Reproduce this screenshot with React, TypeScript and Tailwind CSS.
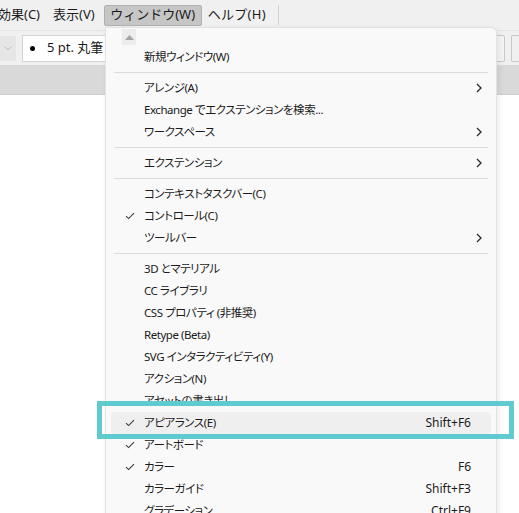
import React from 'react';

type Row =
    | { kind: 'sep' }
    | { kind: 'item'; label: string; check?: boolean; sub?: boolean; shortcut?: string; active?: boolean };

const rows: Row[] = [
    { kind: 'item', label: '新規ウィンドウ(W)' },
    { kind: 'sep' },
    { kind: 'item', label: 'アレンジ(A)', sub: true },
    { kind: 'item', label: 'Exchange でエクステンションを検索...' },
    { kind: 'item', label: 'ワークスペース', sub: true },
    { kind: 'sep' },
    { kind: 'item', label: 'エクステンション', sub: true },
    { kind: 'sep' },
    { kind: 'item', label: 'コンテキストタスクバー(C)' },
    { kind: 'item', label: 'コントロール(C)', check: true },
    { kind: 'item', label: 'ツールバー', sub: true },
    { kind: 'sep' },
    { kind: 'item', label: '3D とマテリアル' },
    { kind: 'item', label: 'CC ライブラリ' },
    { kind: 'item', label: 'CSS プロパティ (非推奨)' },
    { kind: 'item', label: 'Retype (Beta)' },
    { kind: 'item', label: 'SVG インタラクティビティ(Y)' },
    { kind: 'item', label: 'アクション(N)' },
    { kind: 'item', label: 'アセットの書き出し' },
    { kind: 'item', label: 'アピアランス(E)', check: true, shortcut: 'Shift+F6', active: true },
    { kind: 'item', label: 'アートボード', check: true },
    { kind: 'item', label: 'カラー', check: true, shortcut: 'F6' },
    { kind: 'item', label: 'カラーガイド', shortcut: 'Shift+F3' },
    { kind: 'item', label: 'グラデーション', shortcut: 'Ctrl+F9' },
];

function Check() {
    return (
        <svg width="10" height="8" viewBox="0 0 10 8" fill="none">
            <path d="M1 4.2 L3.6 6.6 L9 1.2" stroke="#3a3a3a" strokeWidth="1.1" />
        </svg>
    );
}

function Chevron() {
    return (
        <svg width="6" height="10" viewBox="0 0 6 10" fill="none">
            <path d="M1 1 L5 5 L1 9" stroke="#2a2a2a" strokeWidth="1.3" />
        </svg>
    );
}

function MenuRow({ row }: { row: Row }) {
    if (row.kind === 'sep') {
        return (
            <div className="h-[9px] flex items-center px-2">
                <div className="h-px w-full bg-[#dcdcdc]" />
            </div>
        );
    }
    return (
        <div className="h-[22px] px-[5px]">
            <div
                className={
                    'h-full flex items-center rounded-[4px] pr-[20px] ' +
                    (row.active ? 'bg-[#efefef]' : '')
                }
            >
                <div className="w-[33px] flex justify-center pl-[5px]">{row.check && <Check />}</div>
                <span className="flex-1 whitespace-nowrap tracking-[-0.45px]">{row.label}</span>
                {row.shortcut && <span className="whitespace-nowrap text-[12px]">{row.shortcut}</span>}
                {row.sub && (
                    <span className="flex items-center -mr-[11px]">
                        <Chevron />
                    </span>
                )}
            </div>
        </div>
    );
}

export default function App() {
    return (
        <div
            className="relative w-[519px] h-[513px] overflow-hidden bg-white text-[#1b1b1b]"
            style={{ fontFamily: '"Noto Sans", "Noto Sans CJK JP", sans-serif' }}
        >
            {/* メニューバー */}
            <div className="h-[30px] bg-[#f0f0f0] flex items-center text-[13px] -ml-[3px] whitespace-nowrap">
                <span className="px-[1px]">効果(C)</span>
                <span className="ml-[12px]">表示(V)</span>
                <span className="ml-[9px] h-[21px] w-[98px] justify-center flex items-center bg-[#c6c6c6] border border-[#b0b0b0] rounded-[2px]">
                    ウィンドウ(W)
                </span>
                <span className="ml-[6px] tracking-[0.3px]">ヘルプ(H)</span>
                <div className="ml-[12px] w-px h-[20px] bg-[#d0d0d0]" />
            </div>

            {/* コントロールバー */}
            <div className="h-[35px] bg-[#f0f0f0] border-t border-[#e4e4e4] flex items-center gap-[6px]">
                <div className="w-[16px] h-[25px] bg-[#e6e6e6] flex items-center justify-center">
                    <svg width="8" height="5" viewBox="0 0 8 5" fill="none">
                        <path d="M0.5 0.5 L4 4 L7.5 0.5" stroke="#b8b8b8" strokeWidth="1" />
                    </svg>
                </div>
                <div className="w-[90px] h-[27px] bg-white border border-[#d4d4d4] flex items-center pl-[7px] text-[13px] whitespace-nowrap">
                    <span className="w-[5px] h-[5px] rounded-full bg-black" />
                    <span className="ml-[12px]">5 pt. 丸筆</span>
                </div>
                <div className="flex-1" />
                <div className="w-[16px] h-[27px] border border-[#c8c8c8] rounded-[2px] bg-[#f4f4f4]" />
                <div className="w-[8px] h-[27px] border border-[#c8c8c8] rounded-l-[2px] border-r-0" />
            </div>

            {/* タブバー */}
            <div className="h-[30px] bg-[#d9d9d9] border-b border-[#cfcfcf]" />

            {/* ドロップダウンメニュー */}
            <div className="absolute left-[105px] top-[27px] w-[392px] h-[500px] bg-[#f9f9f9] border border-[#e2e2e2] rounded-tr-[6px] shadow-[2px_2px_6px_rgba(0,0,0,0.08)] text-[11.5px] [font-feature-settings:'palt']">
                <div className="h-[18px] pl-[16px] pt-[1px]">
                    <div className="w-[14px] h-[16px] bg-[#ececec] flex items-center justify-center">
                        <svg width="9" height="5" viewBox="0 0 9 5">
                            <path d="M0 5 L4.5 0 L9 5 Z" fill="#a4a4a4" />
                        </svg>
                    </div>
                </div>
                {rows.map((r, i) => (
                    <MenuRow key={i} row={r} />
                ))}
            </div>

            {/* ハイライト枠 */}
            <div className="absolute left-[97px] top-[401px] w-[417px] h-[38px] border-[5px] border-[#5fcbd0]" />
        </div>
    );
}
